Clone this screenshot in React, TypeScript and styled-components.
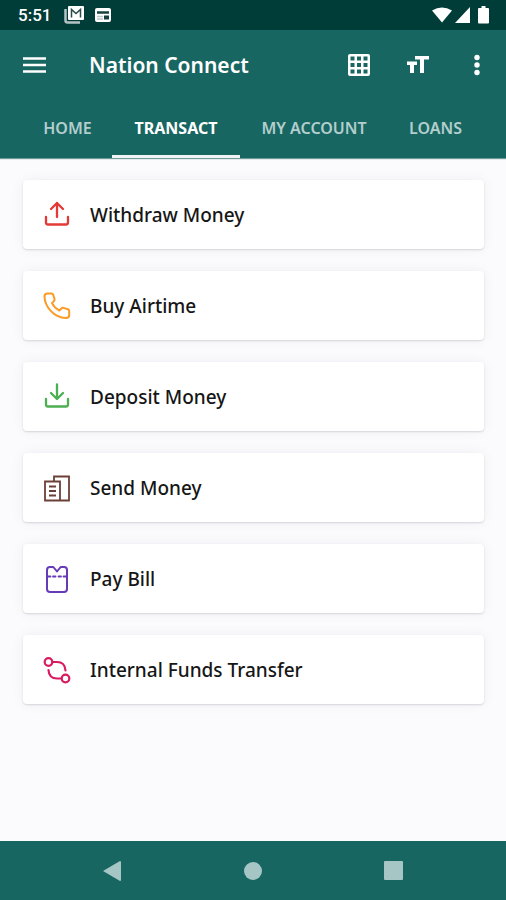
import React from "react";
import styled, { createGlobalStyle } from "styled-components";

const GlobalStyle = createGlobalStyle`
  * { box-sizing: border-box; }
  body { margin: 0; background: #fbfbfd; font-family: "Noto Sans", sans-serif; }
  button { border: 0; background: none; padding: 0; font: inherit; color: inherit; cursor: pointer; }
  svg { display: block; flex: none; }
`;

const Screen = styled.div`
  min-height: 100vh;
  display: flex;
  flex-direction: column;
`;

const StatusBar = styled.div`
  height: 30px;
  padding: 0 16px 0 18px;
  display: flex;
  align-items: center;
  justify-content: space-between;
  background: #003c38;
  color: #fff;
`;

const StatusGroup = styled.div<{ $gap: number }>`
  display: flex;
  align-items: center;
  gap: ${(p) => p.$gap}px;
`;

const Clock = styled.time`
  font: 500 17px/24px Roboto, sans-serif;
  margin-right: 3px;
`;

const Header = styled.header`
  background: #186662;
  color: #fff;
  box-shadow: 0 1px 1px #6f9b99;
`;

const AppBar = styled.div`
  height: 70px;
  display: flex;
  align-items: center;
`;

const IconButton = styled.button<{ $width: number }>`
  width: ${(p) => p.$width}px;
  height: 59px;
  display: grid;
  place-items: center;
`;

const Title = styled.h1`
  flex: 1;
  margin: 0;
  padding-left: 20px;
  font-size: 21px;
  line-height: 28px;
  font-weight: 600;
  white-space: nowrap;
`;

const Tabs = styled.nav`
  display: grid;
  grid-template-columns: 89fr 128fr 148fr 95fr;
  padding: 0 23px;
`;

const Tab = styled.a<{ $active: boolean }>`
  height: 58px;
  display: grid;
  place-items: center;
  color: ${(p) => (p.$active ? "#fff" : "#b3cecd")};
  border-bottom: 3px solid ${(p) => (p.$active ? "#f1f3f7" : "transparent")};
  font-size: 16px;
  line-height: 24px;
  font-weight: ${(p) => (p.$active ? 700 : 600)};
  text-decoration: none;
  white-space: nowrap;
`;

const Main = styled.main`
  flex: 1;
  padding: 22px 22px 22px 23px;
  display: flex;
  flex-direction: column;
  gap: 22px;
`;

const Card = styled.button`
  height: 69px;
  padding: 1px 20px 0;
  display: flex;
  align-items: center;
  gap: 19px;
  text-align: left;
  background: #fff;
  border-radius: 4px;
  box-shadow: 0 1px 2px rgba(30, 35, 50, 0.16), 0 0 14px rgba(40, 40, 90, 0.05);
`;

const Label = styled.span`
  color: #161616;
  font-size: 19px;
  line-height: 28px;
  font-weight: 500;
`;

const NavBar = styled.nav`
  height: 59px;
  padding: 0 42px;
  display: grid;
  grid-template-columns: repeat(3, 1fr);
  background: #186662;
  color: #a6c6c6;
`;

const NavButton = styled.button`
  display: grid;
  place-items: center;
`;

const stroke = (color: string) => ({
  width: 28,
  height: 28,
  viewBox: "0 0 28 28",
  fill: "none",
  stroke: color,
  strokeWidth: 2,
  strokeLinecap: "round" as const,
  strokeLinejoin: "round" as const,
  "aria-hidden": true,
});

const WithdrawIcon = () => (
  <svg {...stroke("#e53935")} strokeWidth={2.3}>
    <path d="M14 16V2M8 8l6-6 6 6M3 16v5.500q0 2 2 2h18q2 0 2-2V16" />
  </svg>
);

const DepositIcon = () => (
  <svg {...stroke("#4caf50")} strokeWidth={2.3}>
    <path d="M14 1.500v14M8 10l6 6 6-6M3 16v5.500q0 2 2 2h18q2 0 2-2V16" />
  </svg>
);

const PhoneIcon = () => (
  <svg {...stroke("#fb9a24")}>
    <path d="M4.500 1.500h4q1.200 0 1.700 1.200l1.300 4.300q.3 1.200-.6 2.100L9 11.100q2.400 4.800 7.400 7.400l2-2q.9-.9 2.100-.6l4.400 1.300q1.300.5 1.300 1.800v4q0 3.100-3.200 3.100Q14 25.700 7.500 18.600 1.700 12 1.500 4.700q0-3.200 3-3.200z" />
  </svg>
);

const BuildingIcon = () => (
  <svg {...stroke("#6d4037")} strokeWidth={1.8} strokeLinecap="butt" strokeLinejoin="miter">
    <path d="M2 7.500h15v19H2zM11 7.500V2.500h15v24H17M6 12.500h7M6 17h7M6 21.500h7" />
  </svg>
);

const BillIcon = () => (
  <svg {...stroke("#673ab7")}>
    <path d="M4 5q0-3 3-3h2.500q1 0 1.700 1L14 6.500 16.800 3q.7-1 1.700-1H21q3 0 3 3v19q0 3-3 3H7q-3 0-3-3z" />
    <path d="M5 11.500h2.500M10 11.500h2.500M15.500 11.500h2.500M20.500 11.500H23" strokeWidth={1.8} />
  </svg>
);

const TransferIcon = () => (
  <svg {...stroke("#d81b60")} strokeWidth={2.2}>
    <circle cx="5.500" cy="6" r="3.800" />
    <circle cx="22.500" cy="22.500" r="3.800" />
    <path d="M9.500 6H14q8 0 8.500 8.500M5.500 14q.5 8.500 8.500 8.500h4.500" />
  </svg>
);

const MailIcon = () => (
  <svg width="20" height="18" viewBox="0 0 20 18" aria-hidden="true">
    <path d="M1.500 3v11.500q0 2 2 2H16" fill="none" stroke="#b4c4c2" strokeWidth="2.500" />
    <rect x="4" y="0" width="16" height="14" rx="1" fill="#fff" />
    <path d="M7.500 11.500V3.500l4.500 4 4.500-4v8" fill="none" stroke="#294b49" strokeWidth="1.500" />
  </svg>
);

const NewsIcon = () => (
  <svg width="18" height="16" viewBox="0 0 18 16" aria-hidden="true">
    <rect x="1" y="1" width="16" height="14" rx="2" fill="#fff" />
    <path d="M3 5.500h12" stroke="#17413e" strokeWidth="2.500" />
    <path d="M3 9.500h6M3 12h6" stroke="#bdc9c8" strokeWidth="1.500" />
    <path d="M10 8.500h5v4h-5z" fill="#17413e" />
  </svg>
);

const items = [
  { label: "Withdraw Money", Icon: WithdrawIcon },
  { label: "Buy Airtime", Icon: PhoneIcon },
  { label: "Deposit Money", Icon: DepositIcon },
  { label: "Send Money", Icon: BuildingIcon },
  { label: "Pay Bill", Icon: BillIcon },
  { label: "Internal Funds Transfer", Icon: TransferIcon },
];

const tabs = ["HOME", "TRANSACT", "MY ACCOUNT", "LOANS"];

export default function App() {
  return (
    <Screen>
      <GlobalStyle />
      <StatusBar>
        <StatusGroup $gap={10}>
          <Clock>5:51</Clock>
          <MailIcon />
          <NewsIcon />
        </StatusGroup>
        <StatusGroup $gap={3}>
          <svg width="20" height="16" viewBox="0 0 20 16" fill="#fff" aria-hidden="true">
            <path d="M0 3.500Q10-2.500 20 3.500L10 15.500z" />
          </svg>
          <svg width="15" height="16" viewBox="0 0 15 16" fill="#fff" aria-hidden="true">
            <path d="M15 0v16H0z" />
          </svg>
          <svg width="17" height="18" viewBox="0 0 17 18" fill="#fff" aria-hidden="true">
            <path d="M8.500 0h4v2H15q1 0 1 1v13.500q0 1-1 1H6q-1 0-1-1V3q0-1 1-1h2.500z" />
          </svg>
        </StatusGroup>
      </StatusBar>
      <Header>
        <AppBar>
          <IconButton $width={69} aria-label="Menu">
            <svg width="23" height="18" viewBox="0 0 23 18" aria-hidden="true">
              <path d="M0 2.500h23M0 9h23M0 15.500h23" stroke="#fff" strokeWidth="2.600" />
            </svg>
          </IconButton>
          <Title>Nation Connect</Title>
          <IconButton $width={59} aria-label="Grid">
            <svg width="22" height="22" viewBox="0 0 22 22" fill="#fff" fillRule="evenodd" aria-hidden="true">
              <path d="M2 0h18q2 0 2 2v18q0 2-2 2H2q-2 0-2-2V2q0-2 2-2zM2.500 2.500v4h4v-4zM9 2.500v4h4v-4zM15.500 2.500v4h4v-4zM2.500 9v4h4V9zM9 9v4h4V9zM15.500 9v4h4V9zM2.500 15.500v4h4v-4zM9 15.500v4h4v-4zM15.500 15.500v4h4v-4z" />
            </svg>
          </IconButton>
          <IconButton $width={59} aria-label="Text size">
            <svg width="22" height="20" viewBox="0 0 22 20" fill="#fff" aria-hidden="true">
              <path d="M8 1h14v3.500h-5V18h-4V4.500H8zM0 6.500h10V10H7v8H3v-8H0z" />
            </svg>
          </IconButton>
          <IconButton $width={59} aria-label="More options">
            <svg width="6" height="22" viewBox="0 0 6 22" fill="#fff" aria-hidden="true">
              <circle cx="3" cy="3.500" r="2.700" />
              <circle cx="3" cy="11" r="2.700" />
              <circle cx="3" cy="18.500" r="2.700" />
            </svg>
          </IconButton>
        </AppBar>
        <Tabs>
          {tabs.map((name) => (
            <Tab key={name} href="#" $active={name === "TRANSACT"}>
              {name}
            </Tab>
          ))}
        </Tabs>
      </Header>
      <Main>
        {items.map(({ label, Icon }) => (
          <Card key={label}>
            <Icon />
            <Label>{label}</Label>
          </Card>
        ))}
      </Main>
      <NavBar>
        <NavButton aria-label="Back">
          <svg width="18" height="20" viewBox="0 0 18 20" fill="currentColor" aria-hidden="true">
            <path d="M17 0q1 0 1 1v18q0 1-1 1L0 10z" />
          </svg>
        </NavButton>
        <NavButton aria-label="Home">
          <svg width="18" height="18" viewBox="0 0 18 18" fill="currentColor" aria-hidden="true">
            <circle cx="9" cy="9" r="9" />
          </svg>
        </NavButton>
        <NavButton aria-label="Recent apps">
          <svg width="19" height="19" viewBox="0 0 19 19" fill="currentColor" aria-hidden="true">
            <rect width="19" height="19" rx="1" />
          </svg>
        </NavButton>
      </NavBar>
    </Screen>
  );
}
